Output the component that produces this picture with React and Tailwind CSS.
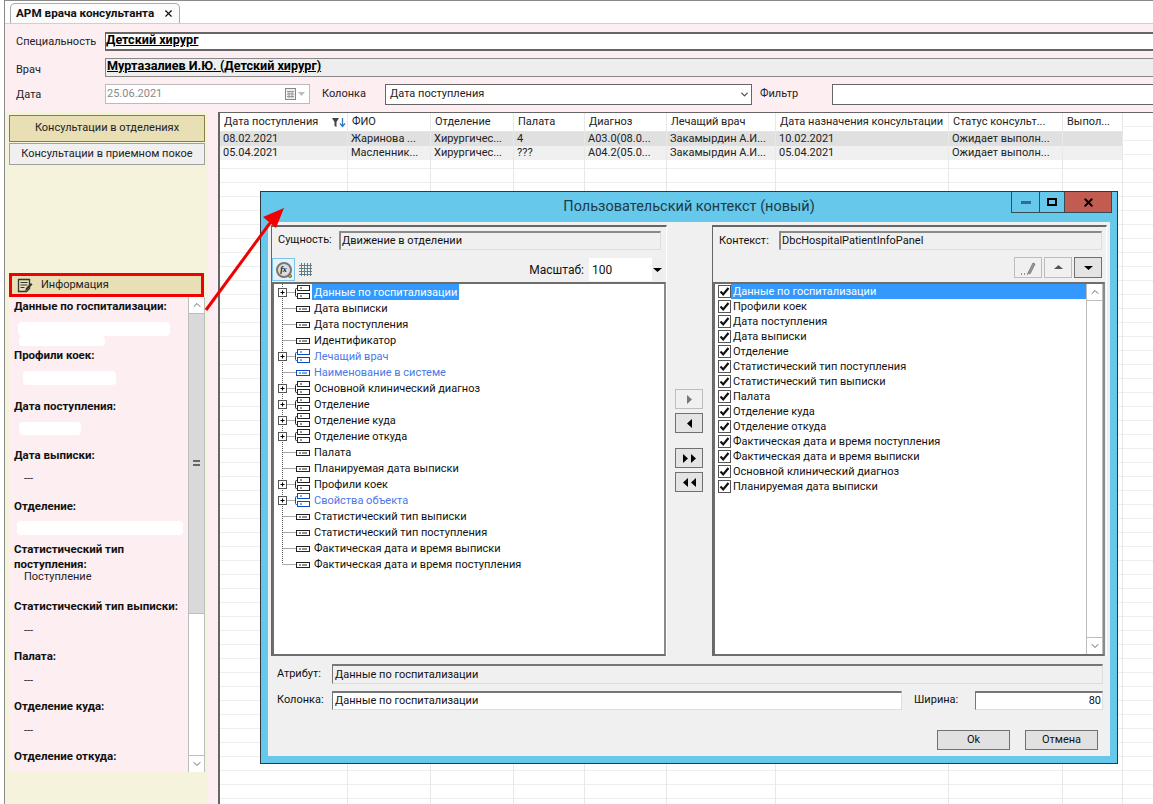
import { ChevronUp, ChevronDown, X } from 'lucide-react';

const columns = [
  { title: 'Дата поступления', w: 'w-[128px]' },
  { title: 'ФИО', w: 'w-[83px]' },
  { title: 'Отделение', w: 'w-[83px]' },
  { title: 'Палата', w: 'w-[71px]' },
  { title: 'Диагноз', w: 'w-[82px]' },
  { title: 'Лечащий врач', w: 'w-[109px]' },
  { title: 'Дата назначения консультации', w: 'w-[173px]' },
  { title: 'Статус консульт...', w: 'w-[114px]' },
  { title: 'Выпол...', w: 'w-[60px]' },
];

const rows = [
  ['08.02.2021', 'Жаринова ...', 'Хирургичес...', '4', 'A03.0(08.0...', 'Закамырдин А.И...', '10.02.2021', 'Ожидает выполн...', ''],
  ['05.04.2021', 'Масленник...', 'Хирургичес...', '???', 'A04.2(05.0...', 'Закамырдин А.И...', '05.04.2021', 'Ожидает выполн...', ''],
];

const treeItems = [
  { label: 'Данные по госпитализации', group: true, selected: true },
  { label: 'Дата выписки' },
  { label: 'Дата поступления' },
  { label: 'Идентификатор' },
  { label: 'Лечащий врач', group: true, blue: true },
  { label: 'Наименование в системе', blue: true },
  { label: 'Основной клинический диагноз', group: true },
  { label: 'Отделение', group: true },
  { label: 'Отделение куда', group: true },
  { label: 'Отделение откуда', group: true },
  { label: 'Палата' },
  { label: 'Планируемая дата выписки' },
  { label: 'Профили коек', group: true },
  { label: 'Свойства объекта', group: true, blue: true },
  { label: 'Статистический тип выписки' },
  { label: 'Статистический тип поступления' },
  { label: 'Фактическая дата и время выписки' },
  { label: 'Фактическая дата и время поступления', last: true },
];

const contextItems = [
  'Данные по госпитализации',
  'Профили коек',
  'Дата поступления',
  'Дата выписки',
  'Отделение',
  'Статистический тип поступления',
  'Статистический тип выписки',
  'Палата',
  'Отделение куда',
  'Отделение откуда',
  'Фактическая дата и время поступления',
  'Фактическая дата и время выписки',
  'Основной клинический диагноз',
  'Планируемая дата выписки',
];

function TreeGlyph({ group, blue, last }) {
  const c = blue ? '#0b4cc4' : '#222222';
  return (
    <svg width="36" height="16" className="shrink-0">
      <path d={last ? 'M6.5 0V8' : 'M6.5 0V16'} stroke="#555" strokeDasharray="1 1" />
      <path d="M6.5 8.5H20" stroke="#555" strokeDasharray="1 1" />
      {group ? (
        <g>
          <rect x="2.5" y="4.5" width="8" height="8" fill="#fff" stroke="#555" />
          <path d="M4.5 8.5h4M6.5 6.5v4" stroke="#000" />
          <path d="M21.5 4.5h-1a1 1 0 0 0-1 1v6a1 1 0 0 0 1 1h1" fill="none" stroke={c} />
          <rect x="21.5" y="1.5" width="12" height="5" fill="#fff" stroke={c} />
          <rect x="21.5" y="9.5" width="12" height="5" fill="#fff" stroke={c} />
          <path d="M24 4h2M24 12h2" stroke={c} />
        </g>
      ) : (
        <g>
          <rect x="20.5" y="6.5" width="13" height="5" fill="#fff" stroke={c} strokeWidth="1" />
          <path d="M23 9h2M26 9h5" stroke={c} />
        </g>
      )}
    </svg>
  );
}

function CheckBox() {
  return (
    <span className="w-[13px] h-[13px] border border-[#555] bg-white shrink-0 flex items-center justify-center">
      <svg width="11" height="11" viewBox="0 0 11 11">
        <path d="M1.5 5.5L4.2 8.4L9.5 2" fill="none" stroke="#111" strokeWidth="2.2" />
      </svg>
    </span>
  );
}

function Triangle({ dir, color = '#000' }) {
  const d = {
    right: 'M3 1L8 5.5L3 10Z',
    left: 'M8 1L3 5.5L8 10Z',
    up: 'M1 7L5.5 3L10 7Z',
    down: 'M1 4L5.5 8L10 4Z',
  }[dir];
  return (
    <svg width="11" height="11" viewBox="0 0 11 11">
      <path d={d} fill={color} />
    </svg>
  );
}

function MoveButton({ children, muted }) {
  return (
    <button className={`w-[28px] h-[20px] border flex items-center justify-center ${muted ? 'border-[#bdbdbd] bg-[#f0f0f0]' : 'border-[#707070] bg-[#e4e4e4]'}`}>
      {children}
    </button>
  );
}

function InfoItem({ label, value, h, children }) {
  return (
    <div className={`${h} shrink-0`}>
      <div className="font-bold text-[11.5px] leading-[15px] text-[#111] pl-[5px]">{label}</div>
      {children}
      {value && <div className="pl-[15px] text-[#222] leading-[13px] mt-[-2px]">{value}</div>}
    </div>
  );
}

function ScrollBar({ thumb }) {
  return (
    <div className="w-[17px] shrink-0 border-x border-[#bdbdbd] bg-white flex flex-col">
      <div className="h-[17px] flex items-center justify-center border-b border-[#bdbdbd] text-[#666]">
        <ChevronUp size={12} />
      </div>
      {thumb && (
        <div className="h-[300px] bg-[#d9d9d9] border-b border-[#bdbdbd] flex items-center justify-center">
          <div className="w-[7px] h-[6px] border-y-2 border-[#666] mt-[-2px]" />
        </div>
      )}
      <div className="flex-1" />
      <div className="h-[17px] flex items-center justify-center border-t border-[#bdbdbd] text-[#666]">
        <ChevronDown size={12} />
      </div>
    </div>
  );
}

function Dialog() {
  return (
    <div className="absolute left-[260px] top-[191px] w-[858px] h-[573px] bg-[#66c8ea] border border-[#2b3a42] flex flex-col text-[#111]">
      <div className="h-[30px] shrink-0 relative flex items-center justify-center text-[14.5px] text-[#1d3a48]">
        Пользовательский контекст (новый)
        <div className="absolute right-[5px] top-0 h-[21px] flex border-x border-b border-[#3a4a52]">
          <div className="w-[28px] border-r border-[#3a4a52] flex items-center justify-center">
            <div className="w-[10px] h-[3px] bg-[#2f6f8c]" />
          </div>
          <div className="w-[25px] border-r border-[#3a4a52] flex items-center justify-center">
            <div className="w-[10px] h-[8px] border-2 border-black" />
          </div>
          <div className="w-[46px] bg-[#c25b50] flex items-center justify-center">
            <X size={13} strokeWidth={3.5} color="#000" />
          </div>
        </div>
      </div>
      <div className="mx-[7px] h-[534px] bg-[#f0f0f0] flex flex-col">
        <div className="flex pl-[3px] pt-[3px]">
          <div className="w-[396px] h-[431px] border-t-2 border-l border-[#666] border-r border-r-white flex flex-col">
            <div className="flex items-center h-[19px] mt-[4px] pl-[6px] pr-[5px]">
              <span className="w-[61px] shrink-0">Сущность:</span>
              <div className="flex-1 h-[19px] border-t-2 border-l-2 border-[#8a8a8a] border-r border-b border-r-[#ddd] border-b-[#ddd] pl-[1px] leading-[15px]">Движение в отделении</div>
            </div>
            <div className="flex items-center h-[23px] mt-[8px]">
              <div className="w-[23px] h-[23px] border border-[#7cc4ea] bg-[#e6f2fa] flex items-center justify-center relative">
                <span className="w-[16px] h-[16px] rounded-full border-2 border-[#777] bg-[#dddddd] text-[8px] italic font-bold font-['Liberation_Serif',serif] flex items-center justify-center">fx</span>
                <span className="absolute right-[2px] bottom-[2px] w-[4px] h-[4px] rounded-full bg-[#d8c020] border border-[#666]" />
              </div>
              <svg width="15" height="15" viewBox="0 0 15 15" className="ml-[3px]" shapeRendering="crispEdges">
                <path d="M3.5 1v13M6.5 1v13M9.5 1v13M12.5 1v13M1 3.5h13M1 6.5h13M1 9.5h13M1 12.5h13" stroke="#5f8080" strokeWidth="1" />
              </svg>
              <span className="ml-auto text-[12px]">Масштаб:</span>
              <div className="w-[74px] h-[23px] bg-white ml-[5px] mr-[3px] flex items-center pl-[3px] text-[12px]">
                100
                <span className="ml-auto w-[11px] h-full bg-[#eeeeee] flex items-center justify-center"><Triangle dir="down" /></span>
              </div>
            </div>
            <div className="flex-1 mt-[1px] bg-white border-2 border-[#6d6d6d] border-r-[#8a8a8a] pl-[2px]">
              {treeItems.map((item) => (
                <div key={item.label} className="h-[16px] flex items-center">
                  <TreeGlyph group={item.group} blue={item.blue} last={item.last} />
                  <span className={`h-[16px] leading-[18px] px-[2px] ${item.selected ? 'bg-[#3399ff] text-white' : item.blue ? 'text-[#4a78e8]' : 'text-[#111]'}`}>{item.label}</span>
                </div>
              ))}
            </div>
          </div>
          <div className="w-[45px] shrink-0 px-[8px] pt-[164px] flex flex-col">
            <MoveButton muted><Triangle dir="right" color="#777" /></MoveButton>
            <div className="mt-[4px]"><MoveButton><Triangle dir="left" /></MoveButton></div>
            <div className="mt-[15px]"><MoveButton><span className="flex -space-x-[3px]"><Triangle dir="right" /><Triangle dir="right" /></span></MoveButton></div>
            <div className="mt-[4px]"><MoveButton><span className="flex -space-x-[3px]"><Triangle dir="left" /><Triangle dir="left" /></span></MoveButton></div>
          </div>
          <div className="w-[395px] h-[431px] border-t-2 border-l border-[#666] border-r border-r-white flex flex-col">
            <div className="flex items-center h-[19px] mt-[4px] pl-[6px] pr-[4px]">
              <span className="w-[60px] shrink-0 pt-[1px]">Контекст:</span>
              <div className="flex-1 h-[19px] border-t-2 border-l-2 border-[#8a8a8a] border-r border-b border-r-[#ddd] border-b-[#ddd] pl-[1px] leading-[15px]">DbcHospitalPatientInfoPanel</div>
            </div>
            <div className="flex justify-end gap-[2px] mt-[7px] pr-[4px] h-[21px]">
              <button className="w-[28px] h-[21px] border border-[#bdbdbd] flex items-center justify-center">
                <svg width="18" height="16" viewBox="0 0 18 16">
                  <path d="M9 13L14 3l2 1-5 10z" fill="#999" stroke="#666" strokeWidth="0.7" />
                  <path d="M2 14h1M5 14h1M8 14h1" stroke="#333" />
                </svg>
              </button>
              <button className="w-[28px] h-[21px] border border-[#bdbdbd] flex items-center justify-center"><Triangle dir="up" color="#555" /></button>
              <button className="w-[28px] h-[21px] border border-[#707070] bg-[#e4e4e4] flex items-center justify-center"><Triangle dir="down" /></button>
            </div>
            <div className="flex-1 mt-[4px] mr-[1px] bg-white border-2 border-[#6d6d6d] border-r-[#8a8a8a] flex">
              <div className="flex-1 pl-[3px]">
                {contextItems.map((label, i) => (
                  <div key={label} className="h-[15px] flex items-center">
                    <CheckBox />
                    <span className={`flex-1 h-[15px] leading-[15px] pl-[2px] ${i === 0 ? 'bg-[#3399ff] text-white' : ''}`}>{label}</span>
                  </div>
                ))}
              </div>
              <ScrollBar />
            </div>
          </div>
        </div>
        <div className="flex items-center h-[20px] mt-[8px] pl-[9px] pr-[7px]">
          <span className="w-[55px] shrink-0 pt-[1px]">Атрибут:</span>
          <div className="flex-1 h-[20px] border-t-2 border-l border-[#777] border-r border-b border-r-[#ddd] border-b-[#ddd] pl-[2px] leading-[17px]">Данные по госпитализации</div>
        </div>
        <div className="flex items-center h-[19px] mt-[7px] pl-[9px] pr-[7px]">
          <span className="w-[55px] shrink-0">Колонка:</span>
          <div className="w-[570px] h-[19px] bg-white border-t-2 border-l border-[#777] border-r border-b border-r-[#ddd] border-b-[#ddd] pl-[2px] leading-[15px]">Данные по госпитализации</div>
          <span className="ml-[12px] w-[61px]">Ширина:</span>
          <div className="flex-1 h-[19px] bg-white border-t-2 border-l border-[#777] border-r border-b border-r-[#ddd] border-b-[#ddd] pr-[1px] text-right leading-[15px]">80</div>
        </div>
        <div className="flex justify-end gap-[15px] mt-[20px] pr-[12px]">
          <button className="w-[73px] h-[20px] border border-[#707070] bg-[#e1e1e1] text-[#111]">Ok</button>
          <button className="w-[73px] h-[20px] border border-[#707070] bg-[#e1e1e1] text-[#111]">Отмена</button>
        </div>
      </div>
    </div>
  );
}

export default function App() {
  return (
    <div className="relative w-[1153px] h-[804px] overflow-hidden bg-white font-['Roboto',sans-serif] text-[11px] text-[#222]">
      <div className="ml-[4px] h-full border-l border-t border-[#8a8a8a] flex flex-col">
        {/* tab strip */}
        <div className="h-[23px] shrink-0 bg-white border-b border-[#cfcfcf] pl-[5px] pt-[2px]">
          <div className="w-[170px] h-[20px] border border-b-0 border-[#aaa] rounded-t-[5px] bg-[#fbfbfb] flex items-center pl-[5px] font-bold text-[11.7px] text-[#111]">
            АРМ врача консультанта
            <X size={11} strokeWidth={2.5} className="ml-auto mr-[5px]" />
          </div>
        </div>

        {/* filter form */}
        <div className="h-[88px] shrink-0 bg-[#fdeef2] relative">
          <div className="flex items-center h-[19px] mt-[8px] pl-[11px]">
            <span className="w-[89px] shrink-0 pt-[2px]">Специальность</span>
            <div className="flex-1 h-[19px] bg-white border-y-2 border-l border-[#666] font-bold text-[12.6px] underline leading-[11px] text-black">Детский хирург</div>
          </div>
          <div className="flex items-center h-[19px] mt-[7px] pl-[11px]">
            <span className="w-[89px] shrink-0 pt-[5px]">Врач</span>
            <div className="flex-1 h-[19px] bg-[#eeeeee] border-y border-l border-[#888] font-bold text-[12.6px] underline leading-[13px] text-black pl-[1px]">Муртазалиев И.Ю. (Детский хирург)</div>
          </div>
          <div className="flex items-center h-[20px] mt-[7px] pl-[11px]">
            <span className="w-[89px] shrink-0 pt-[2px]">Дата</span>
            <div className="w-[205px] h-[20px] shrink-0 bg-white border border-[#bbb] flex items-center pl-[1px] text-[#888]">
              25.06.2021
              <svg width="20" height="12" viewBox="0 0 20 12" className="ml-auto mr-[4px]">
                <rect x="0.5" y="0.5" width="10" height="11" fill="#eee" stroke="#888" />
                <path d="M2 3.5h7M2 6h7M2 8.5h7M4 3v7M7 3v7" stroke="#999" />
                <path d="M13 4h7l-3.5 4z" fill="#bbb" />
              </svg>
            </div>
            <span className="ml-[12px] w-[63px] shrink-0">Колонка</span>
            <div className="w-[367px] h-[21px] shrink-0 bg-white border border-[#666] flex items-center pl-[4px] pt-[1px]">
              Дата поступления
              <ChevronDown size={11} strokeWidth={3} className="ml-auto mr-[1px] text-[#555]" />
            </div>
            <span className="ml-[8px] w-[72px] shrink-0">Фильтр</span>
            <div className="flex-1 h-[21px] bg-white border-y border-l border-[#666]" />
          </div>
        </div>

        <div className="flex-1 flex bg-[#fdeef2] min-h-0">
          {/* left column */}
          <div className="w-[203px] shrink-0 bg-[#f5f3dc] flex flex-col pl-[4px] pr-[3px] pt-[3px]">
            <button className="h-[27px] shrink-0 w-[196px] bg-[#e8dfb5] border border-[#8a7d3f] text-[#222]">Консультации в отделениях</button>
            <button className="h-[22px] shrink-0 w-[196px] mt-[1px] bg-[#f0f0f0] border border-[#a0a0a0] text-[#222]">Консультации в приемном покое</button>
            <div className="h-[108px] shrink-0" />
            <div className="h-[24px] shrink-0 w-[195px] bg-[#e8dfb5] border-[3px] border-[#f00000] flex items-center pl-[5px]">
              <svg width="16" height="15" viewBox="0 0 16 15">
                <path d="M1.5 1.5h11v9l-3 3h-8z" fill="none" stroke="#333" strokeWidth="1.3" />
                <path d="M3.5 4.5h7M3.5 7h7M3.5 9.5h4" stroke="#333" />
                <path d="M8 13l1-3 5-5 1.5 1.5-5 5z" fill="#333" />
              </svg>
              <span className="ml-[8px]">Информация</span>
            </div>
            <div className="h-[475px] shrink-0 w-[196px] bg-[#fdeef2] flex">
              <div className="flex-1 flex flex-col pt-[2px] overflow-hidden">
                <InfoItem label="Данные по госпитализации:" h="h-[49px]">
                  <div className="ml-[9px] mt-[8px] w-[152px] h-[14px] bg-white rounded-[4px]" />
                  <div className="ml-[10px] w-[86px] h-[10px] bg-white rounded-[4px]" />
                </InfoItem>
                <InfoItem label="Профили коек:" h="h-[51px]">
                  <div className="ml-[14px] mt-[8px] w-[93px] h-[14px] bg-white rounded-[4px]" />
                </InfoItem>
                <InfoItem label="Дата поступления:" h="h-[49px]">
                  <div className="ml-[10px] mt-[8px] w-[62px] h-[13px] bg-white rounded-[4px]" />
                </InfoItem>
                <InfoItem label="Дата выписки:" h="h-[51px]">
                  <div className="pl-[15px] mt-[8px]">---</div>
                </InfoItem>
                <InfoItem label="Отделение:" h="h-[43px]">
                  <div className="ml-[8px] mt-[7px] w-[166px] h-[14px] bg-white rounded-[4px]" />
                </InfoItem>
                <InfoItem label={<>Статистический тип<br />поступления:</>} h="h-[57px]" value="Поступление" />
                <InfoItem label="Статистический тип выписки:" h="h-[50px]">
                  <div className="pl-[15px] mt-[9px]">---</div>
                </InfoItem>
                <InfoItem label="Палата:" h="h-[50px]">
                  <div className="pl-[15px] mt-[9px]">---</div>
                </InfoItem>
                <InfoItem label="Отделение куда:" h="h-[50px]">
                  <div className="pl-[15px] mt-[9px]">---</div>
                </InfoItem>
                <InfoItem label="Отделение откуда:" h="h-[22px]" />
              </div>
              <ScrollBar thumb />
            </div>
          </div>

          {/* grid */}
          <div className="flex-1 ml-[10px] bg-white border-t border-l-2 border-[#666] flex min-w-0 bg-[repeating-linear-gradient(to_bottom,transparent_0,transparent_13px,#eeeeee_13px,#eeeeee_14px)]">
            {columns.map((col, i) => (
              <div key={col.title} className={`${col.w} shrink-0 border-r border-[#e8e8e8] flex flex-col`}>
                <div className="h-[19px] shrink-0 bg-white border-b border-[#e4e4e4] pl-[4px] flex items-center whitespace-nowrap">
                  {col.title}
                  {i === 0 && (
                    <svg width="14" height="11" viewBox="0 0 14 11" className="ml-auto mr-[1px]">
                      <path d="M0 1h7L4.5 5v5l-2-1V5z" fill="#444" />
                      <path d="M10.5 1v8M8 6.5l2.5 3 2.5-3" fill="none" stroke="#2f78c4" strokeWidth="1.3" />
                    </svg>
                  )}
                </div>
                {rows.map((row, r) => (
                  <div key={r} className={`h-[14px] shrink-0 pl-[3px] leading-[14px] overflow-hidden whitespace-nowrap ${r === 0 ? 'bg-[#e0e0e0]' : 'bg-[#f0f0f0]'}`}>{row[i]}</div>
                ))}
              </div>
            ))}
          </div>
        </div>
      </div>

      <Dialog />

      {/* callout arrow */}
      <svg width="100" height="120" viewBox="0 0 100 120" className="absolute left-[200px] top-[200px]">
        <path d="M6 110L73 19" stroke="#f00000" strokeWidth="3" />
        <path d="M84 8L63 17L76 28Z" fill="#f00000" />
      </svg>
    </div>
  );
}
